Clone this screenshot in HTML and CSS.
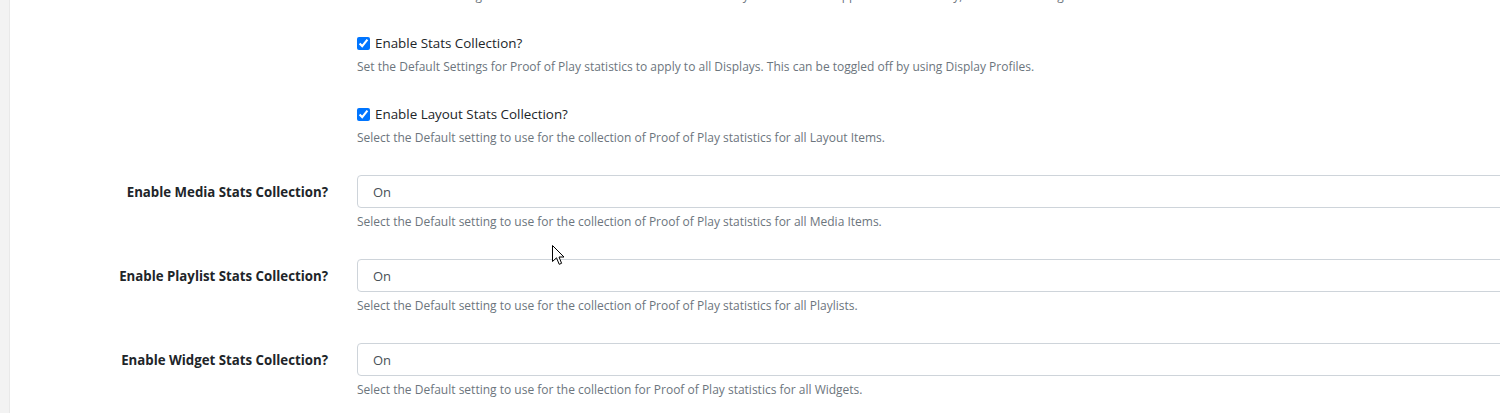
FILE: index.html
```html
<!DOCTYPE html>
<html lang="en">
<head>
<meta charset="utf-8">
<title>Settings</title>
<link rel="stylesheet" href="styles.css">
</head>
<body>
<div class="strip"></div>
<main class="content">
  <form class="settings">
    <div class="row row-top">
      <div class="label"></div>
      <div class="control">
        <small class="help">Set the Default Setting to use for the collection of Statistics for the Day which is then supported on CMS only, and can be changed in the Profiles.</small>
      </div>
    </div>

    <div class="row">
      <div class="label"></div>
      <div class="control">
        <label class="check"><input type="checkbox" checked> <span>Enable Stats Collection?</span></label>
        <small class="help">Set the Default Settings for Proof of Play statistics to apply to all Displays. This can be toggled off by using Display Profiles.</small>
      </div>
    </div>

    <div class="row">
      <div class="label"></div>
      <div class="control">
        <label class="check"><input type="checkbox" checked> <span>Enable Layout Stats Collection?</span></label>
        <small class="help">Select the Default setting to use for the collection of Proof of Play statistics for all Layout Items.</small>
      </div>
    </div>

    <div class="row">
      <label class="label">Enable Media Stats Collection?</label>
      <div class="control control-select">
        <div class="select">On</div>
        <small class="help">Select the Default setting to use for the collection of Proof of Play statistics for all Media Items.</small>
      </div>
    </div>

    <div class="row">
      <label class="label">Enable Playlist Stats Collection?</label>
      <div class="control control-select">
        <div class="select">On</div>
        <small class="help">Select the Default setting to use for the collection of Proof of Play statistics for all Playlists.</small>
      </div>
    </div>

    <div class="row">
      <label class="label">Enable Widget Stats Collection?</label>
      <div class="control control-select">
        <div class="select">On</div>
        <small class="help">Select the Default setting to use for the collection for Proof of Play statistics for all Widgets.</small>
      </div>
    </div>
  </form>
  <svg class="cursor" width="13" height="21" viewBox="0 0 13 21">
    <path d="M0.5 0.5 L0.5 16.5 L4.5 12.8 L7.2 19.3 L9.6 18.3 L7 12 L12 12 Z" fill="#fff" stroke="#000" stroke-width="1" stroke-linejoin="round"/>
  </svg>
</main>
</body>
</html>
```

FILE: styles.css
```css
html, body {
  margin: 0;
  padding: 0;
  height: 100%;
  overflow: hidden;
  background: #fff;
}
body {
  display: flex;
  font-family: "Open Sans", "Noto Sans", sans-serif;
  color: #212529;
  font-size: 13px;
}
.strip {
  width: 9px;
  flex: none;
  background: #f3f3f3;
  border-right: 1px solid #e9e9e9;
}
.content {
  position: relative;
  flex: 1;
  min-width: 0;
}
.settings {
  display: flex;
  flex-direction: column;
  gap: 28px;
  margin-top: -13px;
}
.row {
  display: grid;
  grid-template-columns: 318px 1160px;
  column-gap: 29px;
  align-items: start;
}
.label {
  text-align: right;
  font-weight: 700;
  font-size: 13.25px;
  line-height: 35px;
  color: #212529;
}
.control {
  display: flex;
  flex-direction: column;
  gap: 4px;
}
.control-select {
  gap: 5px;
}
.check {
  display: flex;
  align-items: center;
  gap: 5px;
  line-height: 21px;
  font-size: 13.4px;
}
.check input {
  margin: 0;
  width: 13px;
  height: 13px;
  accent-color: #0075ff;
}
.select {
  height: 31px;
  border: 1px solid #ced4da;
  border-radius: 4px;
  padding: 0 15px;
  line-height: 32px;
  font-size: 13px;
  color: #495057;
}
.help {
  display: block;
  font-size: 12px;
  line-height: 18px;
  color: #6c757d;
}
.cursor {
  position: absolute;
  left: 542px;
  top: 245px;
}
```
